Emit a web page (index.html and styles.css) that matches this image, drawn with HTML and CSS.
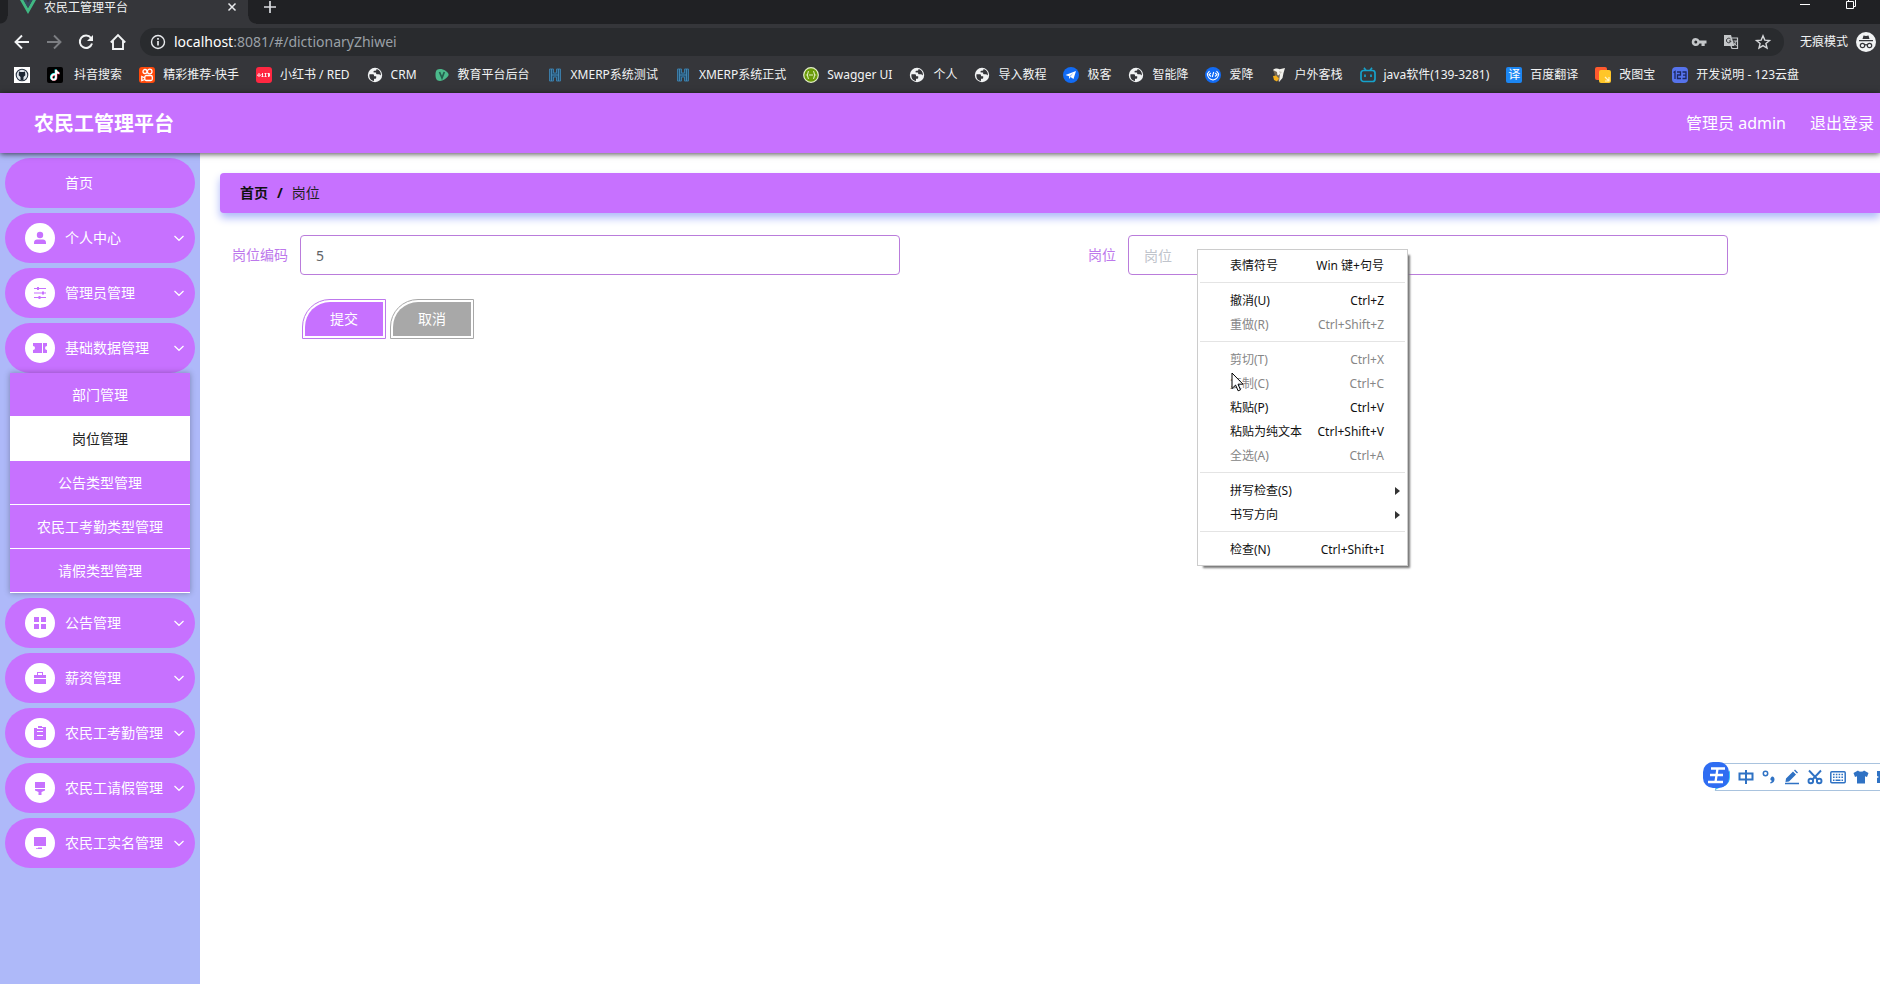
FILE: index.html
```html
<!DOCTYPE html>
<html lang="zh-CN">
<head>
<meta charset="utf-8">
<title>农民工管理平台</title>
<link rel="stylesheet" href="styles.css">
</head>
<body>
<svg class="defs" aria-hidden="true">
  <symbol id="globe" viewBox="0 0 16 16"><circle cx="8" cy="8" r="7.200" fill="#f1f3f4"/><path d="M2.500 7.200h3.200c.9 0 1.300.5 1.300 1.200 0 .6.500.8 1.200.8h1v1.600c0 .7-.5 1-1.200 1H7v2.200C4 13.500 1.800 11 2.500 7.200zM9.500 2c2 .5 3.300 1.700 4 3.500.4 1.200.5 2 .3 3-.6-.8-1.400-1.200-2.300-1.200h-1.200c-.8 0-1.200-.4-1.200-1.100V5.500H7.500c-.7 0-1-.4-1-.9 0-.6.400-.9 1-.9h1c.7 0 1-.500 1-1.700z" fill="#35363a"/></symbol>
  <symbol id="hmark" viewBox="0 0 16 16"><path d="M2.500 2h4v4h3V2h4v12h-4v-4h-3v4h-4z" fill="#245273" stroke="#3b7ba6"/><path d="M4.500 2v12M11.500 2v12M4.500 8h7" stroke="#4b91bb" stroke-width=".8"/></symbol>
  <symbol id="chevron" viewBox="0 0 10 10"><path d="M.5 3 5 7.300 9.500 3" fill="none" stroke="currentColor" stroke-width="1.200"/></symbol>
</svg>

<div class="browser">
  <div class="tabs">
    <div class="tab">
      <svg class="i16" viewBox="0 0 16 16"><path d="M0 1h3.500L8 9l4.500-8H16L8 15z" fill="#41b883"/><path d="M3.500 1h3L8 3.700 9.500 1h3L8 9z" fill="#35495e"/></svg>
      <span class="tab-title">农民工管理平台</span>
      <button class="plain" aria-label="关闭标签"><svg class="i10" viewBox="0 0 10 10"><path d="m1.500 1.500 7 7m0-7-7 7" stroke="#e8eaed" stroke-width="1.500"/></svg></button>
    </div>
    <button class="plain newtab" aria-label="新标签页"><svg class="i14" viewBox="0 0 14 14"><path d="M7 1v12M1 7h12" stroke="#dadce0" stroke-width="1.700"/></svg></button>
    <div class="window-controls">
      <button class="plain" aria-label="最小化"><svg class="i10" viewBox="0 0 10 10"><path d="M0 4.500h10" stroke="#fff"/></svg></button>
      <button class="plain" aria-label="还原"><svg class="i10" viewBox="0 0 10 10"><path d="M.5 1.500h7v7h-7zM2.500 1.500v-2h7v7h-2" fill="none" stroke="#fff"/></svg></button>
    </div>
  </div>
  <div class="toolbar">
    <button class="plain" aria-label="后退"><svg class="i16" viewBox="0 0 16 16"><path d="M15 8H2M8 1.500 1.500 8 8 14.500" fill="none" stroke="#f1f3f4" stroke-width="1.900"/></svg></button>
    <button class="plain" aria-label="前进"><svg class="i16" viewBox="0 0 16 16"><path d="M1 8h13M8 1.500 14.500 8 8 14.500" fill="none" stroke="#7c7e82" stroke-width="1.900"/></svg></button>
    <button class="plain" aria-label="刷新"><svg class="i16" viewBox="0 0 16 16"><path d="M13 4A6.200 6.200 0 1 0 14 9.500" fill="none" stroke="#f1f3f4" stroke-width="2"/><path d="M15 1v6H9z" fill="#f1f3f4"/></svg></button>
    <button class="plain" aria-label="主页"><svg class="i16" viewBox="0 0 16 16"><path d="M.8 8.500 8 1.200l7.200 7.300M3 7v8h10V7" fill="none" stroke="#f1f3f4" stroke-width="1.900"/></svg></button>
    <div class="omnibox">
      <svg class="i16" viewBox="0 0 16 16"><circle cx="8" cy="8" r="6.500" fill="none" stroke="#e8eaed" stroke-width="1.400"/><path d="M8 7v4.500M8 4v1.700" stroke="#e8eaed" stroke-width="1.700"/></svg>
      <span class="url"><b>localhost</b>:8081/#/dictionaryZhiwei</span>
      <div class="omni-actions">
        <svg class="i16" viewBox="0 0 16 16"><path fill-rule="evenodd" d="M4.800 4A4 4 0 1 0 8.500 9.400H10.500V12h3.200V9.400H15.500V6.600H8.500A4 4 0 0 0 4.800 4zm0 2.500a1.500 1.500 0 1 1 0 3 1.500 1.500 0 0 1 0-3z" fill="#c4c7c9"/></svg>
        <svg class="i16" viewBox="0 0 16 16"><path d="M1 1h7l3.500 11H1z" fill="#c4c7c9"/><path d="M9 4h5.500v10.500H9l-1-2.500" fill="none" stroke="#c4c7c9" stroke-width="1.200"/><path d="M7.500 5A2.300 2.300 0 1 0 8 7H6" fill="none" stroke="#35363a"/><path d="M10.500 7h3.500M13 7c-.4 2-1.200 3.200-2 4m0-2.500 2.500 3.500" fill="none" stroke="#c4c7c9"/></svg>
        <svg class="i16" viewBox="0 0 16 16"><path d="m8 1.800 1.800 4.300 4.700.4-3.600 3 1.100 4.600L8 11.600l-4 2.500 1.100-4.600-3.600-3 4.700-.4z" fill="none" stroke="#d5d7d9" stroke-width="1.400"/></svg>
      </div>
    </div>
    <div class="incognito"><span>无痕模式</span>
      <svg class="i20" viewBox="0 0 20 20"><circle cx="10" cy="10" r="10" fill="#f1f3f4"/><path d="m6.500 7 1-3.500 2.500.5 2.500-.5 1 3.500zM3 8h14v1.200H3z" fill="#35363a"/><g fill="none" stroke="#35363a" stroke-width="1.200"><circle cx="6.500" cy="13.500" r="2.200"/><circle cx="13.500" cy="13.500" r="2.200"/><path d="M8.700 13q1.300-.8 2.600 0"/></g></svg>
    </div>
  </div>
  <nav class="bookmarks">
    <a href="#" aria-label="GitHub"><svg class="i16" viewBox="0 0 16 16"><path d="M0 0h16v16H0z" fill="#fff"/><circle cx="8" cy="8" r="5.800" fill="#dfe5ec" stroke="#283342" stroke-width="1.100"/><path d="M5 4.500 6.500 5h3l1.500-.5.300 3.800-1.800 1.700v3.300h-3V10L4.700 8.300z" fill="#1c2633"/></svg></a>
    <a href="#"><svg class="i16" viewBox="0 0 16 16"><rect width="16" height="16" rx="2"/><g fill="none" stroke-width="1.800"><path d="M7.600 7C5 6.700 3.600 8.500 3.800 10.300c.3 3 4.700 3 4.700 0V2.500c.3 1.800 1.500 3 3.300 3.100" stroke="#25f4ee"/><path d="M8.600 8C6 7.700 4.600 9.500 4.800 11c.5 2.600 4.700 2.400 4.700-.4V3.500c.3 1.800 1.500 3 3.300 3.100" stroke="#fe2c55"/><path d="M8.100 7.500C5.500 7.200 4.200 9 4.400 10.600c.4 2.800 4.600 2.700 4.600-.2V3c.3 1.800 1.500 3 3.300 3.100" stroke="#fff"/></g></svg><span>&nbsp;抖音搜索</span></a>
    <a href="#"><svg class="i16" viewBox="0 0 16 16"><rect width="16" height="16" rx="3" fill="#ff4a0c"/><g fill="none" stroke="#fff" stroke-width="1.300"><circle cx="6" cy="4.500" r="2"/><circle cx="10.700" cy="4.500" r="2.300"/><rect x="5.800" y="8.500" width="7.500" height="5" rx="1.500"/><path d="m5.800 11-3-1.500v4l3-1"/></g></svg><span>精彩推荐-快手</span></a>
    <a href="#"><svg class="i16" viewBox="0 0 16 16"><rect width="16" height="16" rx="3" fill="#ff2741"/><path d="M3 6v4M1.800 7.500v1.500M4.200 7.500v1.500M5.500 7.500h1.500M5.500 9.500h2M6.500 6v4M8.500 6.500h2M9.500 6.500v3M8.500 9.500h2M11.500 6.500h2v3M12.500 6v4" stroke="#fff" stroke-width=".9" fill="none"/></svg><span>小红书 / RED</span></a>
    <a href="#"><svg class="i16"><use href="#globe"/></svg><span>CRM</span></a>
    <a href="#"><svg class="i16" viewBox="0 0 16 16"><path d="M3 2.800c2-1.300 6-.8 8.500 1 3 2 4 4 2.500 5.500-2 2.300-5 4.700-8 4.700C2.500 14 1.500 11 1.500 8c0-2 .2-4.200 1.500-5.200z" fill="#4bb98b"/><path d="M5.500 5 8 11l2.300-6" stroke="#235f4d" stroke-width="1.700" fill="none"/></svg><span>教育平台后台</span></a>
    <a href="#"><svg class="i16"><use href="#hmark"/></svg><span>XMERP系统测试</span></a>
    <a href="#"><svg class="i16"><use href="#hmark"/></svg><span>XMERP系统正式</span></a>
    <a href="#"><svg class="i16" viewBox="0 0 16 16"><circle cx="8" cy="8" r="7.300" fill="#6a9a08" stroke="#e4f0c8" stroke-width="1.200"/><path d="M6 4.500c-2 0-.5 3-2 3.500 1.500.500 0 3.500 2 3.500M10 4.500c2 0 .5 3 2 3.500-1.500.500 0 3.500-2 3.500M6 8h4" fill="none" stroke="#e4f0c8" stroke-width="1.100"/></svg><span>Swagger UI</span></a>
    <a href="#"><svg class="i16"><use href="#globe"/></svg><span>个人</span></a>
    <a href="#"><svg class="i16"><use href="#globe"/></svg><span>导入教程</span></a>
    <a href="#"><svg class="i16" viewBox="0 0 16 16"><circle cx="8" cy="8" r="8" fill="#126bf4"/><path d="m2.500 8 10.500-4-2.500 8-3-2-1.500 2V9.300z" fill="#fff"/><path d="m6 9.300 4.500-3.500-3 4" fill="#8ebcff"/></svg><span>极客</span></a>
    <a href="#"><svg class="i16"><use href="#globe"/></svg><span>智能降</span></a>
    <a href="#"><svg class="i16" viewBox="0 0 16 16"><circle cx="8" cy="8" r="8" fill="#126bf4"/><path d="M4.500 4 2.300 7c.4 3.500 3 5.500 5.700 6 2.700-.5 5.300-2.500 5.700-6L11.500 4M5.800 6 4 7.700 6 9.500M10.200 6 12 7.700 10 9.500M8.700 5l-1.400 5" stroke="#fff" stroke-width="1.100" fill="none"/></svg><span>爱降</span></a>
    <a href="#"><svg class="i16" viewBox="0 0 16 16"><path d="M2 3c2-2 5-1.800 6.500-.8L14 1l-1.500 5-1 5L8 15l-1-6z" fill="#f1f1ec"/><path d="m2 3 4 2 .5 4 2.500-2-1 8-3-4z" fill="#756957"/><path d="m2 9 3-.5 3 3-2 3-3-1.500z" fill="#f4ae19"/><path d="m8 4 3 1-2 2z" fill="#c8c4bb"/></svg><span>户外客栈</span></a>
    <a href="#"><svg class="i16" viewBox="0 0 16 16"><path d="m4 .8 2 2.700m6-2.700-2 2.700" stroke="#16a2cc" stroke-width="1.600"/><rect x="1" y="3.500" width="14" height="11" rx="2.500" fill="none" stroke="#16a2cc" stroke-width="1.700"/><path d="M5 7.500V10m6-2.500V10" stroke="#16a2cc" stroke-width="1.700"/></svg><span>java软件(139-3281)</span></a>
    <a href="#"><span class="translate-mark" aria-hidden="true">译</span><span>百度翻译</span></a>
    <a href="#"><svg class="i16" viewBox="0 0 16 16"><rect width="12" height="13" rx="2" fill="#ff5a2e"/><rect x="4" y="3" width="12" height="13" rx="2" fill="#ffc629"/><path d="m10 10 3.500 3.500M14 10v4h-4" stroke="#fff4c4" stroke-width="1.200" fill="none"/></svg><span>改图宝</span></a>
    <a href="#"><svg class="i16" viewBox="0 0 16 16"><rect width="16" height="16" rx="4" fill="#5673ec"/><path d="m1.500 5.500 1.500-1V12M5 5h3.500v3H5.500v3.500H9M10.500 5h3.500v6.500h-3.500M11 8.200h3" fill="none" stroke="#1d2960" stroke-width="1.300"/></svg><span>开发说明 - 123云盘</span></a>
  </nav>
</div>

<header class="app-header">
  <h1>农民工管理平台</h1>
  <div class="user"><span>管理员 admin</span><a href="#">退出登录</a></div>
</header>

<div class="app-body">
  <nav class="sidebar">
    <a class="menu-item home" href="#">首页</a>
    <button class="menu-item"><span class="badge"><svg viewBox="0 0 14 14"><circle cx="7" cy="4" r="3.200"/><path d="M1 13v-1.500C1 9.500 2.500 8.500 4 8.500h6c1.500 0 3 1 3 3V13z"/></svg></span><span>个人中心</span><svg class="chev"><use href="#chevron"/></svg></button>
    <button class="menu-item"><span class="badge"><svg viewBox="0 0 14 14"><path d="M1 2h12v1H1zM1 6.500h12v1H1zM1 11h12v1H1zM4 1h2v3H4zM9 5.500h2v3H9zM5.500 10h2v3h-2z"/></svg></span><span>管理员管理</span><svg class="chev"><use href="#chevron"/></svg></button>
    <button class="menu-item"><span class="badge"><svg viewBox="0 0 14 14"><path d="M0 2h9v10H0V9a2 2 0 0 0 0-4zM10 2h4v3a2 2 0 0 0 0 4v3h-4z"/></svg></span><span>基础数据管理</span><svg class="chev"><use href="#chevron"/></svg></button>
    <div class="submenu">
      <a href="#">部门管理</a>
      <a class="active" href="#">岗位管理</a>
      <a href="#">公告类型管理</a>
      <a href="#">农民工考勤类型管理</a>
      <a href="#">请假类型管理</a>
    </div>
    <button class="menu-item"><span class="badge"><svg viewBox="0 0 14 14"><path d="M1 1h5v5H1zM8 1h5v5H8zM1 8h5v5H1zM8 8h5v5H8z"/></svg></span><span>公告管理</span><svg class="chev"><use href="#chevron"/></svg></button>
    <button class="menu-item"><span class="badge"><svg viewBox="0 0 14 14"><path fill-rule="evenodd" d="M4 1h6v3h3v3H1V4h3zm1 1v2h4V2zM1 8h12v5H1z"/></svg></span><span>薪资管理</span><svg class="chev"><use href="#chevron"/></svg></button>
    <button class="menu-item"><span class="badge"><svg viewBox="0 0 14 14"><path fill-rule="evenodd" d="M5 0h4v1h4v13H1V2h4zM4 5v1h6V5zm0 4v1h6V9zM4 2v1h6V2z"/></svg></span><span>农民工考勤管理</span><svg class="chev"><use href="#chevron"/></svg></button>
    <button class="menu-item"><span class="badge"><svg viewBox="0 0 14 14"><path d="M2 1h10v6H2zM2 8h10v1.500L8.500 11v3h-3v-3L2 9.500z"/></svg></span><span>农民工请假管理</span><svg class="chev"><use href="#chevron"/></svg></button>
    <button class="menu-item"><span class="badge"><svg viewBox="0 0 14 14"><path d="M1 1h12v9H1zM5 11.500h4V13H3v-.7h2z"/></svg></span><span>农民工实名管理</span><svg class="chev"><use href="#chevron"/></svg></button>
  </nav>
  <main class="content">
    <div class="breadcrumb"><b>首页</b><b>/</b><span>岗位</span></div>
    <form>
      <div class="fields">
        <div class="field"><label for="code">岗位编码</label><input id="code" type="text" value="5"></div>
        <div class="field"><label for="post">岗位</label><input id="post" type="text" placeholder="岗位"></div>
      </div>
      <div class="actions">
        <button type="button" class="btn">提交</button>
        <button type="button" class="btn cancel">取消</button>
      </div>
    </form>
  </main>
</div>

<div class="context-menu" role="menu">
  <button role="menuitem"><span>表情符号</span><span>Win 键+句号</span></button>
  <hr>
  <button role="menuitem"><span>撤消(U)</span><span>Ctrl+Z</span></button>
  <button role="menuitem" disabled><span>重做(R)</span><span>Ctrl+Shift+Z</span></button>
  <hr>
  <button role="menuitem" disabled><span>剪切(T)</span><span>Ctrl+X</span></button>
  <button role="menuitem" disabled><span>复制(C)</span><span>Ctrl+C</span></button>
  <button role="menuitem"><span>粘贴(P)</span><span>Ctrl+V</span></button>
  <button role="menuitem"><span>粘贴为纯文本</span><span>Ctrl+Shift+V</span></button>
  <button role="menuitem" disabled><span>全选(A)</span><span>Ctrl+A</span></button>
  <hr>
  <button role="menuitem" class="has-sub"><span>拼写检查(S)</span></button>
  <button role="menuitem" class="has-sub"><span>书写方向</span></button>
  <hr>
  <button role="menuitem"><span>检查(N)</span><span>Ctrl+Shift+I</span></button>
  <svg class="cursor" viewBox="0 0 13 20"><path d="M1 1v15.500l3.600-3.400 2.500 5.700 2.400-1-2.500-5.600h5z" fill="#fff" stroke="#000"/></svg>
</div>

<div class="ime">
  <svg class="ime-logo" viewBox="0 0 28 32"><path d="M10 30q3-1 3-3c8 0 14-4 14-11V9l-9 17z" fill="#35c5f7"/><rect x="0" y="1" width="26" height="26" rx="10" fill="#2f6df2"/><path d="M8 7.500h14M7 14h13M5 21h15M14.500 7.500 12.500 21" stroke="#fff" stroke-width="2.300" fill="none"/></svg>
  <div class="ime-bar">
    <svg class="i16" viewBox="0 0 16 16"><path d="M1.500 4.500h13v6h-13zM8 1v14" fill="none" stroke="currentColor" stroke-width="2"/></svg>
    <svg class="i16" viewBox="0 0 16 16"><circle cx="4.500" cy="4.500" r="2.200" fill="none" stroke="currentColor" stroke-width="1.500"/><path d="M13 8.500c1.500 3-.5 5.500-3.500 6l-.3-1.300c1-.2 1.500-.8 1.600-1.500a2 2 0 1 1 2.200-3.200z" fill="currentColor"/></svg>
    <svg class="i16" viewBox="0 0 16 16"><path d="m2 9.500 7-7 3 3-7 7-3.500.5zM10 1.500l1-1 3 3-1 1zM1 13.700h14v1.500H1z" fill="currentColor"/></svg>
    <svg class="i16" viewBox="0 0 16 16"><g fill="none" stroke="currentColor" stroke-width="1.900"><path d="m2 1.500 9 9.500m3-9.500L5 11"/><circle cx="3.800" cy="12" r="2.300"/><circle cx="12.200" cy="12" r="2.300"/></g></svg>
    <svg class="i16" viewBox="0 0 16 16"><rect x=".8" y="2.800" width="14.400" height="11" rx="1" fill="none" stroke="currentColor" stroke-width="1.500"/><path d="M3 5.500h10M3 8.300h10" stroke="currentColor" stroke-width="1.600" stroke-dasharray="1.600 1.200"/><path d="M3 11.300h1.500m1 0h5m1 0H13" stroke="currentColor" stroke-width="1.500"/></svg>
    <svg class="i16" viewBox="0 0 16 16"><path d="M5 1.500c1 1.600 5 1.600 6 0l4.500 2.500-1.500 4-2-.8V14.500H4V7.200L2 8 .5 4z" fill="currentColor"/></svg>
    <svg class="i16" viewBox="0 0 16 16"><path d="M1 2h5v4h4V2h4v5l-2 1 2 1v5H9v-3H6v3H1v-5l2-1-2-1z" fill="currentColor"/></svg>
  </div>
</div>
</body>
</html>
```
FILE: styles.css
```css
* { box-sizing: border-box; }

:root {
  --purple: #c771ff;
  --lavender: #aeb9f9;
}

body {
  margin: 0;
  height: 100vh;
  display: flex;
  flex-direction: column;
  overflow: hidden;
  background: #fff;
  font: 14px/20px "Noto Sans", "Noto Sans CJK SC", sans-serif;
}

button, input { font: inherit; }
a { color: inherit; text-decoration: none; }
svg { display: block; flex: none; overflow: visible; }
.defs { position: absolute; width: 0; height: 0; }
.plain { display: flex; padding: 0; border: 0; background: none; }
.i10 { width: 10px; height: 10px; }
.i14 { width: 14px; height: 14px; }
.i16 { width: 16px; height: 16px; }
.i20 { width: 20px; height: 20px; }

/* Browser frame */
.browser {
  flex: none;
  background: #35363a;
  color: #f1f3f4;
  font-size: 12px;
  line-height: 16px;
}
.tabs {
  display: flex;
  height: 24px;
  padding-left: 8px;
  background: #202124;
}
.tab {
  position: relative;
  display: flex;
  align-items: flex-start;
  gap: 8px;
  width: 240px;
  padding: 0 11px 0 12px;
  background: #35363a;
}
.tab::before,
.tab::after {
  content: "";
  position: absolute;
  bottom: 0;
  width: 8px;
  height: 8px;
}
.tab::before {
  right: 100%;
  background: radial-gradient(circle at 0 0, #202124 7px, #35363a 8px);
}
.tab::after {
  left: 100%;
  background: radial-gradient(circle at 100% 0, #202124 7px, #35363a 8px);
}
.tab .i16 { margin-top: -1px; }
.tab-title { flex: 1; }
.tab button { margin-top: 2px; }
.newtab { margin-left: 15px; }
.window-controls {
  display: flex;
  gap: 36px;
  margin-left: auto;
  padding-right: 24px;
}
.toolbar {
  display: flex;
  align-items: center;
  gap: 16px;
  height: 36px;
  padding: 0 4px 0 14px;
}
.omnibox {
  flex: 1;
  display: flex;
  align-items: center;
  gap: 8px;
  height: 28px;
  margin-left: -2px;
  padding: 0 13px 0 10px;
  border-radius: 14px;
  background: #292b2e;
}
.url { color: #9aa0a6; font-size: 14px; line-height: 20px; }
.url b { color: #fff; font-weight: 400; }
.omni-actions { display: flex; gap: 16px; margin-left: auto; }
.incognito { display: flex; align-items: center; gap: 8px; }
.bookmarks {
  display: flex;
  gap: 17px;
  height: 33px;
  padding: 6px 14px;
  white-space: nowrap;
}
.bookmarks a { display: flex; align-items: center; gap: 8px; height: 17px; }
.translate-mark {
  width: 16px;
  border-radius: 2px;
  background: #1c86f2;
  color: #fff;
  text-align: center;
}

/* Application */
.app-header {
  position: relative;
  z-index: 1;
  flex: none;
  display: flex;
  align-items: center;
  justify-content: space-between;
  height: 60px;
  padding: 0 6px 0 34px;
  background: var(--purple);
  color: #fff;
  box-shadow: 0 1px 6px rgba(0, 0, 0, .7);
}
.app-header h1 { margin: 0; padding-top: 2px; font-size: 20px; line-height: 28px; }
.user { display: flex; gap: 24px; font-size: 16px; line-height: 24px; }
.app-body { flex: 1; display: flex; min-height: 0; }
.sidebar {
  flex: none;
  width: 200px;
  padding-top: 5px;
  background: var(--lavender);
}
.menu-item {
  display: flex;
  align-items: center;
  gap: 10px;
  width: 190px;
  height: 50px;
  margin: 0 5px 5px;
  padding: 0 11px 0 20px;
  border: 0;
  border-radius: 25px;
  background: var(--purple);
  color: #fff;
}
.home { padding-left: 60px; }
.badge {
  display: grid;
  place-items: center;
  width: 30px;
  height: 30px;
  border-radius: 50%;
  background: #fff;
}
.badge svg { width: 14px; height: 14px; fill: var(--purple); }
.chev { width: 10px; height: 10px; margin-left: auto; }
.submenu {
  position: relative;
  margin: -5px 10px 5px;
  box-shadow: 0 0 6px rgba(0, 0, 0, .3);
}
.submenu a {
  display: block;
  height: 44px;
  border-bottom: 1px solid #fff;
  background: var(--purple);
  color: #fff;
  line-height: 44px;
  text-align: center;
}
.submenu .active { background: #fff; color: #222; }

.content { flex: 1; padding: 20px 0 0 20px; }
.breadcrumb {
  display: flex;
  align-items: center;
  gap: 9px;
  height: 40px;
  padding: 0 20px;
  border-radius: 4px 0 0 4px;
  background: var(--purple);
  color: #222;
  box-shadow: 0 5px 8px var(--lavender);
}
.breadcrumb b { color: #111; }
.fields {
  display: grid;
  grid-template-columns: 1fr 1fr;
  padding: 22px 4px 0 0;
}
.field { display: flex; align-items: center; }
.field label {
  width: 80px;
  padding-right: 12px;
  color: #bd78ec;
  text-align: right;
}
.field input {
  width: 600px;
  max-width: calc(100% - 80px);
  height: 40px;
  padding: 0 15px;
  border: 1px solid #ba7cdb;
  border-radius: 4px;
  outline: 0;
  background: #fff;
  color: #606266;
}
.field input::placeholder { color: #c0c4cc; }
.actions { display: flex; gap: 4px; padding: 24px 0 0 82px; }
.btn {
  width: 84px;
  height: 40px;
  padding: 2px;
  border: 1px solid #bd78ec;
  border-radius: 28px 0 0 0;
  background: var(--purple) content-box;
  color: #fff;
}
.cancel { border-color: #a8a8a8; background-color: #a8a8a8; }

/* Floating layers */
.context-menu {
  position: absolute;
  z-index: 2;
  left: 1197px;
  top: 249px;
  width: 211px;
  padding: 4px 2px 3px;
  border: 1px solid #ccc;
  background: #fff;
  box-shadow: 4px 4px 2px -2px #777;
  font-size: 12px;
}
.context-menu button {
  display: flex;
  align-items: center;
  justify-content: space-between;
  width: 100%;
  height: 24px;
  padding: 0 21px 0 30px;
  border: 0;
  background: none;
  color: #111;
  white-space: nowrap;
}
.context-menu button:disabled { color: #868686; }
.context-menu hr { height: 1px; margin: 4px 0 6px; border: 0; background: #e4e4e4; }
.context-menu .has-sub { padding-right: 5px; }
.has-sub::after {
  content: "";
  border: 4px solid transparent;
  border-left: 5px solid #333;
  border-right: 0;
}
.cursor { position: absolute; left: 33px; top: 122px; width: 13px; height: 20px; }
.ime {
  position: absolute;
  right: 0;
  top: 761px;
  display: flex;
  align-items: flex-start;
  width: 177px;
  overflow: hidden;
}
.ime-logo { position: relative; width: 28px; height: 32px; }
.ime-bar {
  flex: none;
  display: flex;
  align-items: center;
  gap: 7px;
  height: 28px;
  margin: 2px 0 0 -16px;
  padding-left: 22px;
  border: 1px solid #a9c3de;
  border-right: 0;
  background: #fff;
  color: #2f72c4;
}
```
